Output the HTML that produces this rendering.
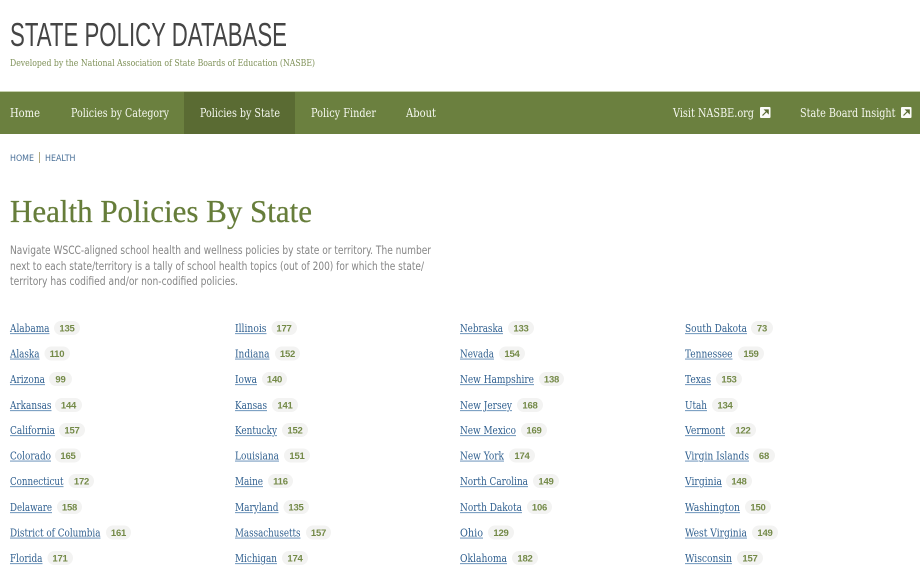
<!DOCTYPE html>
<html lang="en"><head><meta charset="utf-8"><title>Health Policies By State</title>
<style>
html,body{margin:0;padding:0;background:#fff;width:920px;height:575px;overflow:hidden}
svg{display:block;filter:blur(.3px)}
text{white-space:pre}
.nav{font:12px "DejaVu Serif",serif;fill:#f6f8f0}
.a{font:11.5px "DejaVu Serif",serif;fill:#7fa2c4;text-decoration:underline}
.a tspan{fill:#2f5f8f}
.n{font:bold 9.5px "Liberation Sans",sans-serif;letter-spacing:-.2px;fill:#748a48;text-anchor:middle}
.p{font:11.3px "DejaVu Sans",sans-serif;fill:#858585}
.b{font:8.5px "DejaVu Sans",sans-serif;fill:#4a7098}
.pill{fill:#f3f3f2}
</style></head><body>
<svg width="920" height="575" viewBox="0 0 920 575" xmlns="http://www.w3.org/2000/svg">
<text x="10" y="46" textLength="277" lengthAdjust="spacingAndGlyphs" style="font:33.500px 'Liberation Sans',sans-serif;fill:#454545">STATE POLICY DATABASE</text>
<text x="10" y="66" textLength="305" lengthAdjust="spacingAndGlyphs" style="font:9.5px 'DejaVu Serif',serif;fill:#7f9158">Developed by the National Association of State Boards of Education (NASBE)</text>

<rect x="0" y="91" width="920" height="1" fill="#c5cfad"/>
<rect x="0" y="92" width="920" height="42" fill="#6b803f"/>
<rect x="184" y="92" width="111" height="42" fill="#5a6b33"/>
<text class="nav" x="10" y="117" textLength="30" lengthAdjust="spacingAndGlyphs">Home</text>
<text class="nav" x="71" y="117" textLength="98" lengthAdjust="spacingAndGlyphs">Policies by Category</text>
<text class="nav" x="200" y="117" textLength="80" lengthAdjust="spacingAndGlyphs">Policies by State</text>
<text class="nav" x="311" y="117" textLength="65" lengthAdjust="spacingAndGlyphs">Policy Finder</text>
<text class="nav" x="406" y="117" textLength="30" lengthAdjust="spacingAndGlyphs">About</text>
<text class="nav" x="673" y="117" textLength="81" lengthAdjust="spacingAndGlyphs">Visit NASBE.org</text>
<rect x="760" y="107" width="10.5" height="11" rx="1" fill="#fbfbf8"/>
<path d="M762.5 115.500l4-4M765 110h3.200v3.200z" stroke="#5a6b33" stroke-width="1.200" fill="#5a6b33"/>
<text class="nav" x="800" y="117" textLength="95.5" lengthAdjust="spacingAndGlyphs">State Board Insight</text>
<rect x="901" y="107" width="10.5" height="11" rx="1" fill="#fbfbf8"/>
<path d="M903.5 115.500l4-4M906 110h3.200v3.200z" stroke="#5a6b33" stroke-width="1.200" fill="#5a6b33"/>

<text class="b" x="10" y="161" textLength="24" lengthAdjust="spacingAndGlyphs">HOME</text>
<rect x="39" y="152" width="1" height="11" fill="#b3ab80"/>
<text class="b" x="45" y="161" textLength="30.5" lengthAdjust="spacingAndGlyphs">HEALTH</text>

<text x="10" y="222" textLength="302" lengthAdjust="spacingAndGlyphs" style="font:32px 'Liberation Serif',serif;fill:#667d3a;stroke:#667d3a;stroke-width:.25px">Health Policies By State</text>

<text class="p" x="10" y="254" textLength="421" lengthAdjust="spacingAndGlyphs">Navigate WSCC-aligned school health and wellness policies by state or territory. The number</text>
<text class="p" x="10" y="270" textLength="414" lengthAdjust="spacingAndGlyphs">next to each state/territory is a tally of school health topics (out of 200) for which the state/</text>
<text class="p" x="10" y="285" textLength="228" lengthAdjust="spacingAndGlyphs">territory has codified and/or non-codified policies.</text>

<!-- Column 1 -->
<text class="a" x="10" y="332" textLength="39.5" lengthAdjust="spacingAndGlyphs"><tspan>Alabama</tspan></text><rect class="pill" x="54" y="321" width="26" height="14" rx="7"/><text class="n" x="67" y="331.500">135</text>
<text class="a" x="10" y="357.500" textLength="29.5" lengthAdjust="spacingAndGlyphs"><tspan>Alaska</tspan></text><rect class="pill" x="44.5" y="346.500" width="25.5" height="14" rx="7"/><text class="n" x="57" y="357">110</text>
<text class="a" x="10" y="383" textLength="35" lengthAdjust="spacingAndGlyphs"><tspan>Arizona</tspan></text><rect class="pill" x="49" y="372" width="23" height="14" rx="7"/><text class="n" x="60.500" y="382.500">99</text>
<text class="a" x="10" y="409" textLength="41.5" lengthAdjust="spacingAndGlyphs"><tspan>Arkansas</tspan></text><rect class="pill" x="55" y="398" width="27" height="14" rx="7"/><text class="n" x="68.500" y="408.500">144</text>
<text class="a" x="10" y="434" textLength="45" lengthAdjust="spacingAndGlyphs"><tspan>California</tspan></text><rect class="pill" x="59" y="423" width="26" height="14" rx="7"/><text class="n" x="72" y="433.500">157</text>
<text class="a" x="10" y="459.500" textLength="41" lengthAdjust="spacingAndGlyphs"><tspan>Colorado</tspan></text><rect class="pill" x="55" y="448.500" width="26" height="14" rx="7"/><text class="n" x="68" y="459">165</text>
<text class="a" x="10" y="485" textLength="53.5" lengthAdjust="spacingAndGlyphs"><tspan>Connecticut</tspan></text><rect class="pill" x="68.500" y="474" width="25.5" height="14" rx="7"/><text class="n" x="81.500" y="484.500">172</text>
<text class="a" x="10" y="511" textLength="42" lengthAdjust="spacingAndGlyphs"><tspan>Delaware</tspan></text><rect class="pill" x="57" y="500" width="25" height="14" rx="7"/><text class="n" x="69.500" y="510.500">158</text>
<text class="a" x="10" y="536.500" textLength="90.5" lengthAdjust="spacingAndGlyphs"><tspan>District of Columbia</tspan></text><rect class="pill" x="106" y="525.500" width="25" height="14" rx="7"/><text class="n" x="118.500" y="536">161</text>
<text class="a" x="10" y="562" textLength="32.5" lengthAdjust="spacingAndGlyphs"><tspan>Florida</tspan></text><rect class="pill" x="47.500" y="551" width="25.5" height="14" rx="7"/><text class="n" x="60" y="561.500">171</text>

<!-- Column 2 -->
<text class="a" x="235" y="332" textLength="31.5" lengthAdjust="spacingAndGlyphs"><tspan>Illinois</tspan></text><rect class="pill" x="271.500" y="321" width="25.5" height="14" rx="7"/><text class="n" x="284" y="331.500">177</text>
<text class="a" x="235" y="357.500" textLength="34.5" lengthAdjust="spacingAndGlyphs"><tspan>Indiana</tspan></text><rect class="pill" x="275" y="346.500" width="25" height="14" rx="7"/><text class="n" x="287.500" y="357">152</text>
<text class="a" x="235" y="383" textLength="22" lengthAdjust="spacingAndGlyphs"><tspan>Iowa</tspan></text><rect class="pill" x="262" y="372" width="25" height="14" rx="7"/><text class="n" x="274.500" y="382.500">140</text>
<text class="a" x="235" y="409" textLength="32" lengthAdjust="spacingAndGlyphs"><tspan>Kansas</tspan></text><rect class="pill" x="272" y="398" width="26" height="14" rx="7"/><text class="n" x="285" y="408.500">141</text>
<text class="a" x="235" y="434" textLength="42" lengthAdjust="spacingAndGlyphs"><tspan>Kentucky</tspan></text><rect class="pill" x="282" y="423" width="26" height="14" rx="7"/><text class="n" x="295" y="433.500">152</text>
<text class="a" x="235" y="459.500" textLength="44" lengthAdjust="spacingAndGlyphs"><tspan>Louisiana</tspan></text><rect class="pill" x="284" y="448.500" width="26" height="14" rx="7"/><text class="n" x="297" y="459">151</text>
<text class="a" x="235" y="485" textLength="28" lengthAdjust="spacingAndGlyphs"><tspan>Maine</tspan></text><rect class="pill" x="268" y="474" width="25" height="14" rx="7"/><text class="n" x="280.500" y="484.500">116</text>
<text class="a" x="235" y="511" textLength="43.5" lengthAdjust="spacingAndGlyphs"><tspan>Maryland</tspan></text><rect class="pill" x="283.500" y="500" width="25.5" height="14" rx="7"/><text class="n" x="296" y="510.500">135</text>
<text class="a" x="235" y="536.500" textLength="65.5" lengthAdjust="spacingAndGlyphs"><tspan>Massachusetts</tspan></text><rect class="pill" x="306" y="525.500" width="25" height="14" rx="7"/><text class="n" x="318.500" y="536">157</text>
<text class="a" x="235" y="562" textLength="42" lengthAdjust="spacingAndGlyphs"><tspan>Michigan</tspan></text><rect class="pill" x="282" y="551" width="26" height="14" rx="7"/><text class="n" x="295" y="561.500">174</text>

<!-- Column 3 -->
<text class="a" x="460" y="332" textLength="43" lengthAdjust="spacingAndGlyphs"><tspan>Nebraska</tspan></text><rect class="pill" x="508" y="321" width="26" height="14" rx="7"/><text class="n" x="521" y="331.500">133</text>
<text class="a" x="460" y="357.500" textLength="34" lengthAdjust="spacingAndGlyphs"><tspan>Nevada</tspan></text><rect class="pill" x="499" y="346.500" width="26" height="14" rx="7"/><text class="n" x="512" y="357">154</text>
<text class="a" x="460" y="383" textLength="74" lengthAdjust="spacingAndGlyphs"><tspan>New Hampshire</tspan></text><rect class="pill" x="539" y="372" width="25" height="14" rx="7"/><text class="n" x="551.500" y="382.500">138</text>
<text class="a" x="460" y="409" textLength="52" lengthAdjust="spacingAndGlyphs"><tspan>New Jersey</tspan></text><rect class="pill" x="517" y="398" width="26" height="14" rx="7"/><text class="n" x="530" y="408.500">168</text>
<text class="a" x="460" y="434" textLength="56" lengthAdjust="spacingAndGlyphs"><tspan>New Mexico</tspan></text><rect class="pill" x="521" y="423" width="26" height="14" rx="7"/><text class="n" x="534" y="433.500">169</text>
<text class="a" x="460" y="459.500" textLength="44" lengthAdjust="spacingAndGlyphs"><tspan>New York</tspan></text><rect class="pill" x="509" y="448.500" width="26" height="14" rx="7"/><text class="n" x="522" y="459">174</text>
<text class="a" x="460" y="485" textLength="68" lengthAdjust="spacingAndGlyphs"><tspan>North Carolina</tspan></text><rect class="pill" x="533" y="474" width="26" height="14" rx="7"/><text class="n" x="546" y="484.500">149</text>
<text class="a" x="460" y="511" textLength="62" lengthAdjust="spacingAndGlyphs"><tspan>North Dakota</tspan></text><rect class="pill" x="527" y="500" width="25" height="14" rx="7"/><text class="n" x="539.500" y="510.500">106</text>
<text class="a" x="460" y="536.500" textLength="23" lengthAdjust="spacingAndGlyphs"><tspan>Ohio</tspan></text><rect class="pill" x="488" y="525.500" width="26" height="14" rx="7"/><text class="n" x="501" y="536">129</text>
<text class="a" x="460" y="562" textLength="47" lengthAdjust="spacingAndGlyphs"><tspan>Oklahoma</tspan></text><rect class="pill" x="512" y="551" width="26" height="14" rx="7"/><text class="n" x="525" y="561.500">182</text>

<!-- Column 4 -->
<text class="a" x="685" y="332" textLength="62" lengthAdjust="spacingAndGlyphs"><tspan>South Dakota</tspan></text><rect class="pill" x="751" y="321" width="22" height="14" rx="7"/><text class="n" x="762" y="331.500">73</text>
<text class="a" x="685" y="357.500" textLength="47.5" lengthAdjust="spacingAndGlyphs"><tspan>Tennessee</tspan></text><rect class="pill" x="738" y="346.500" width="26" height="14" rx="7"/><text class="n" x="751" y="357">159</text>
<text class="a" x="685" y="383" textLength="26" lengthAdjust="spacingAndGlyphs"><tspan>Texas</tspan></text><rect class="pill" x="716" y="372" width="26" height="14" rx="7"/><text class="n" x="729" y="382.500">153</text>
<text class="a" x="685" y="409" textLength="22" lengthAdjust="spacingAndGlyphs"><tspan>Utah</tspan></text><rect class="pill" x="712" y="398" width="26" height="14" rx="7"/><text class="n" x="725" y="408.500">134</text>
<text class="a" x="685" y="434" textLength="40" lengthAdjust="spacingAndGlyphs"><tspan>Vermont</tspan></text><rect class="pill" x="730" y="423" width="26" height="14" rx="7"/><text class="n" x="743" y="433.500">122</text>
<text class="a" x="685" y="459.500" textLength="64" lengthAdjust="spacingAndGlyphs"><tspan>Virgin Islands</tspan></text><rect class="pill" x="753" y="448.500" width="22" height="14" rx="7"/><text class="n" x="764" y="459">68</text>
<text class="a" x="685" y="485" textLength="37" lengthAdjust="spacingAndGlyphs"><tspan>Virginia</tspan></text><rect class="pill" x="726" y="474" width="26" height="14" rx="7"/><text class="n" x="739" y="484.500">148</text>
<text class="a" x="685" y="511" textLength="55" lengthAdjust="spacingAndGlyphs"><tspan>Washington</tspan></text><rect class="pill" x="745" y="500" width="26" height="14" rx="7"/><text class="n" x="758" y="510.500">150</text>
<text class="a" x="685" y="536.500" textLength="62" lengthAdjust="spacingAndGlyphs"><tspan>West Virginia</tspan></text><rect class="pill" x="752" y="525.500" width="26" height="14" rx="7"/><text class="n" x="765" y="536">149</text>
<text class="a" x="685" y="562" textLength="47" lengthAdjust="spacingAndGlyphs"><tspan>Wisconsin</tspan></text><rect class="pill" x="737" y="551" width="26" height="14" rx="7"/><text class="n" x="750" y="561.500">157</text>
</svg>
</body></html>
